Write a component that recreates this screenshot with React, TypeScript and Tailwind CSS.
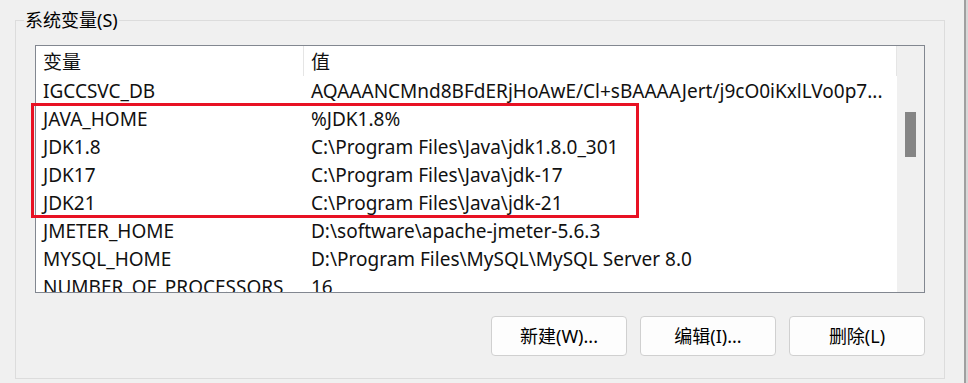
import React from "react";

const rows: [string, string][] = [
  ["IGCCSVC_DB", "AQAAANCMnd8BFdERjHoAwE/Cl+sBAAAAJert/j9cO0iKxlLVo0p7..."],
  ["JAVA_HOME", "%JDK1.8%"],
  ["JDK1.8", "C:\\Program Files\\Java\\jdk1.8.0_301"],
  ["JDK17", "C:\\Program Files\\Java\\jdk-17"],
  ["JDK21", "C:\\Program Files\\Java\\jdk-21"],
  ["JMETER_HOME", "D:\\software\\apache-jmeter-5.6.3"],
  ["MYSQL_HOME", "D:\\Program Files\\MySQL\\MySQL Server 8.0"],
  ["NUMBER_OF_PROCESSORS", "16"],
];

const font = { fontFamily: '"Noto Sans", "Noto Sans CJK SC", sans-serif' };

function Btn({ label }: { label: string }) {
  return (
    <button className="w-[136px] h-[40px] rounded-[4px] border border-[#d0d0d0] bg-[#fdfdfd] text-[18px] text-black">
      {label}
    </button>
  );
}

export default function App() {
  return (
    <div className="relative w-[968px] h-[383px] bg-[#f0f0f0] overflow-hidden flex" style={font}>
      <div className="pl-[15px] pt-[8px]">
        <fieldset className="w-[930px] h-[371px] border border-[#dcdcdc] px-[19px] pb-[22px]">
          <legend className="-ml-[11px] px-[1px] text-[18px] leading-[24px] text-black">系统变量(S)</legend>
          <div className="mt-[13px] h-[248px] border border-[#828790] bg-white flex overflow-hidden">
            <div className="flex-1 flex flex-col text-[19px] leading-[26px] text-[#111]">
              <div className="flex h-[30px] shrink-0 items-center">
                <div className="w-[268px] h-full pl-[7px] pt-[2px] flex items-center border-r border-[#e5e5e5]">变量</div>
                <div className="flex-1 h-full pl-[7px] pt-[2px] flex items-center border-r border-[#e5e5e5]">值</div>
              </div>
              {rows.map(([k, v]) => (
                <div key={k} className="flex h-[28px] shrink-0 items-center pt-[2px]">
                  <div className="w-[268px] pl-[7px] whitespace-nowrap overflow-hidden">{k}</div>
                  <div className="flex-1 pl-[7px] whitespace-nowrap overflow-hidden">{v}</div>
                </div>
              ))}
            </div>
            <div className="w-[27px] h-full bg-[#f0f0f0] pt-[66px] flex justify-center">
              <div className="w-[11px] h-[45px] bg-[#858585]" />
            </div>
          </div>
          <div className="mt-[23px] flex justify-end gap-[13px]">
            <Btn label="新建(W)..." />
            <Btn label="编辑(I)..." />
            <Btn label="删除(L)" />
          </div>
        </fieldset>
      </div>
      <div className="ml-auto flex h-full">
        <div className="w-[2px] h-full bg-[#a0a0a0]" />
        <div className="w-[2px] h-full bg-[#d8d8d8]" />
      </div>
      <div className="absolute left-[31px] top-[103px] w-[608px] h-[115px] border-[3px] border-[#e81123] pointer-events-none" />
    </div>
  );
}
